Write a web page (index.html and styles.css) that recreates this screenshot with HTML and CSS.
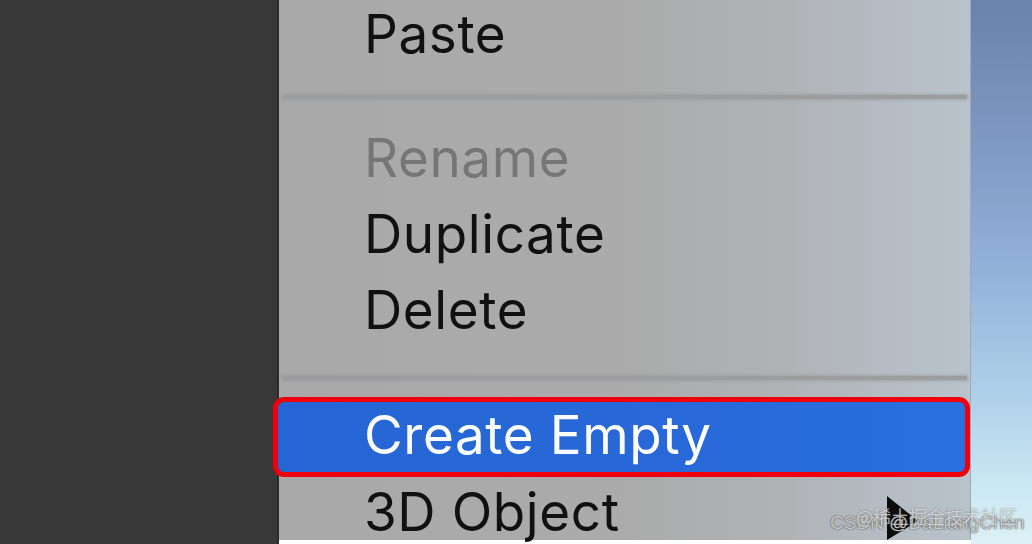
FILE: index.html
```html
<!DOCTYPE html>
<html lang="en">
<head>
<meta charset="utf-8">
<title>Context menu</title>
<link rel="stylesheet" href="styles.css">
</head>
<body>
<div class="screen">
  <div class="side-dark"></div>
  <div class="menu">
    <div class="item item-first">Paste</div>
    <div class="sep sep-1"></div>
    <div class="item disabled">Rename</div>
    <div class="item">Duplicate</div>
    <div class="item">Delete</div>
    <div class="sep sep-2"></div>
    <div class="item selected">Create Empty</div>
    <div class="item item-sub">3D Object
      <svg class="sub-arrow" width="34" height="46" viewBox="0 0 34 46"><polygon points="1,1 1,45 32,26" fill="#0c0c0c"/></svg>
    </div>
  </div>
  <div class="side-desktop"></div>
  <div class="watermark">
    <span class="wm-a">CSDN @DaLiangChen</span>
    <span class="wm-b">@稀土掘金技术社区</span>
  </div>
</div>
</body>
</html>
```

FILE: styles.css
```css
* { box-sizing: border-box; }
html, body { margin: 0; padding: 0; }
body {
  width: 1032px;
  height: 544px;
  overflow: hidden;
  font-family: Inter, "Noto Sans", "Liberation Sans", sans-serif;
}
.screen {
  position: relative;
  display: flex;
  width: 1032px;
  height: 544px;
}
.side-dark {
  width: 279px;
  flex: none;
  background: #383838;
  border-right: 2px solid #2b2b2b;
}
.menu {
  flex: none;
  width: 692px;
  height: 544px;
  display: flex;
  flex-direction: column;
  padding-top: 0;
  margin-top: -4px;
  background: linear-gradient(to right, #a9a9a9 0%, #ababab 50%, #afb1b3 70%, #b5bcc3 88%, #b9c3cb 100%);
  border-right: 1px solid #a0a8b4;
}
.item {
  flex: none;
  height: 76px;
  line-height: 76px;
  padding-left: 85px;
  font-size: 53px;
  font-weight: 400;
  color: #111;
  letter-spacing: 0.6px;
  white-space: nowrap;
}
.disabled { color: #767676; }
.sep {
  flex: none;
  height: 48px;
  display: flex;
  align-items: center;
  padding: 0 3px 0 4px;
}
.sep::before {
  content: "";
  display: block;
  width: 100%;
  height: 4px;
  background: #9c9d9e;
  box-shadow: 0 0 3px 1px rgba(150,150,150,0.6);
}
.sep-1 { padding-top: 2px; }
.sep-2 { height: 49px; padding-top: 10px; }
.selected {
  height: 80px;
  line-height: 66px;
  margin-left: -6px;
  padding-left: 86px;
  color: #fafcff;
  background: linear-gradient(to right, #2566d4 0%, #2868d8 60%, #2a70e0 100%);
  border: 5px solid #f0000c;
  border-radius: 11px;
  position: relative;
  z-index: 1;
}
.item-sub {
  margin-top: -3px;
  position: relative;
}
.sub-arrow {
  position: absolute;
  left: 607px;
  top: 21px;
}
.side-desktop {
  flex: 1;
  background: linear-gradient(to bottom, #6b82ab 0%, #7d98c2 25%, #93b2da 50%, #aecfe9 72%, #cbe8f3 90%, #dcf1f6 100%);
}
.watermark {
  position: absolute;
  left: 828px;
  top: 503px;
  width: 196px;
  height: 34px;
  line-height: 34px;
  white-space: nowrap;
  z-index: 2;
}
.wm-a {
  position: absolute; left: 2px; top: 3px;
  font-family: "Liberation Sans", Arial, sans-serif;
  font-size: 19px;
  color: rgba(225,225,225,0.85);
  text-shadow: 0 0 1px rgba(40,40,40,0.8), 0 0 2px rgba(60,60,60,0.6);
}
.wm-b {
  position: absolute; left: 28px; top: -4px;
  font-family: "Noto Sans CJK SC", sans-serif; font-size: 18px;
  color: rgba(240,240,240,0.7);
  text-shadow: 0 0 2px rgba(60,60,60,0.6);
}
```
